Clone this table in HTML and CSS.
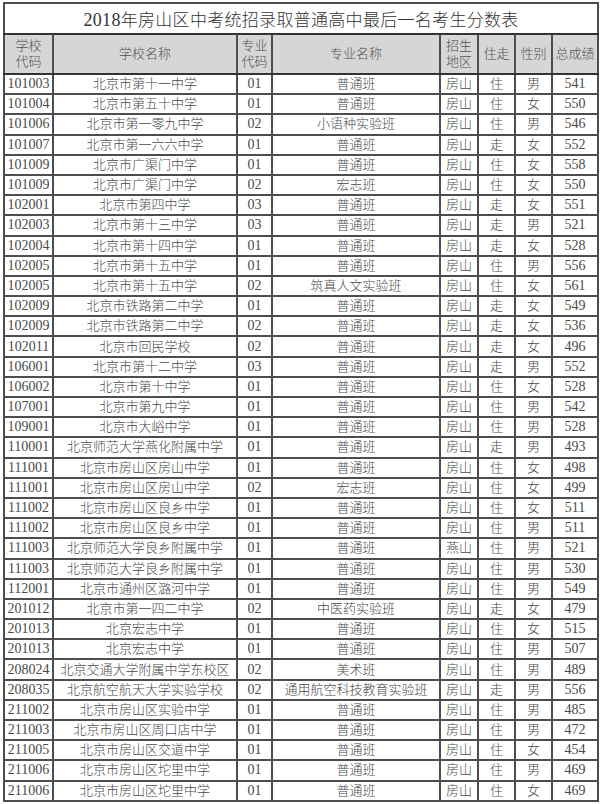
FILE: index.html
```html
<!DOCTYPE html>
<html lang="zh-CN">
<head>
<meta charset="utf-8">
<title>2018年房山区中考统招录取普通高中最后一名考生分数表</title>
<link rel="stylesheet" href="styles.css">
</head>
<body>
<table class="sheet">
  <colgroup>
    <col class="c-code"><col class="c-school"><col class="c-mcode"><col class="c-major"><col class="c-area"><col class="c-stay"><col class="c-sex"><col class="c-score">
  </colgroup>
  <thead>
    <tr class="title-row"><th colspan="8"><span class="num">2018</span>年房山区中考统招录取普通高中最后一名考生分数表</th></tr>
    <tr class="head-row">
      <th>学校<br>代码</th><th>学校名称</th><th>专业<br>代码</th><th>专业名称</th><th>招生<br>地区</th><th>住走</th><th>性别</th><th>总成绩</th>
    </tr>
  </thead>
  <tbody>
    <tr><td class="num">101003</td><td>北京市第十一中学</td><td class="num">01</td><td>普通班</td><td>房山</td><td>住</td><td>男</td><td class="num">541</td></tr>
    <tr><td class="num">101004</td><td>北京市第五十中学</td><td class="num">01</td><td>普通班</td><td>房山</td><td>住</td><td>女</td><td class="num">550</td></tr>
    <tr><td class="num">101006</td><td>北京市第一零九中学</td><td class="num">02</td><td>小语种实验班</td><td>房山</td><td>住</td><td>男</td><td class="num">546</td></tr>
    <tr><td class="num">101007</td><td>北京市第一六六中学</td><td class="num">01</td><td>普通班</td><td>房山</td><td>走</td><td>女</td><td class="num">552</td></tr>
    <tr><td class="num">101009</td><td>北京市广渠门中学</td><td class="num">01</td><td>普通班</td><td>房山</td><td>住</td><td>女</td><td class="num">558</td></tr>
    <tr><td class="num">101009</td><td>北京市广渠门中学</td><td class="num">02</td><td>宏志班</td><td>房山</td><td>住</td><td>女</td><td class="num">550</td></tr>
    <tr><td class="num">102001</td><td>北京市第四中学</td><td class="num">03</td><td>普通班</td><td>房山</td><td>走</td><td>女</td><td class="num">551</td></tr>
    <tr><td class="num">102003</td><td>北京市第十三中学</td><td class="num">03</td><td>普通班</td><td>房山</td><td>走</td><td>男</td><td class="num">521</td></tr>
    <tr><td class="num">102004</td><td>北京市第十四中学</td><td class="num">01</td><td>普通班</td><td>房山</td><td>走</td><td>女</td><td class="num">528</td></tr>
    <tr><td class="num">102005</td><td>北京市第十五中学</td><td class="num">01</td><td>普通班</td><td>房山</td><td>住</td><td>男</td><td class="num">556</td></tr>
    <tr><td class="num">102005</td><td>北京市第十五中学</td><td class="num">02</td><td>筑真人文实验班</td><td>房山</td><td>住</td><td>女</td><td class="num">561</td></tr>
    <tr><td class="num">102009</td><td>北京市铁路第二中学</td><td class="num">01</td><td>普通班</td><td>房山</td><td>走</td><td>女</td><td class="num">549</td></tr>
    <tr><td class="num">102009</td><td>北京市铁路第二中学</td><td class="num">02</td><td>普通班</td><td>房山</td><td>走</td><td>女</td><td class="num">536</td></tr>
    <tr><td class="num">102011</td><td>北京市回民学校</td><td class="num">02</td><td>普通班</td><td>房山</td><td>走</td><td>女</td><td class="num">496</td></tr>
    <tr><td class="num">106001</td><td>北京市第十二中学</td><td class="num">03</td><td>普通班</td><td>房山</td><td>走</td><td>男</td><td class="num">552</td></tr>
    <tr><td class="num">106002</td><td>北京市第十中学</td><td class="num">01</td><td>普通班</td><td>房山</td><td>住</td><td>女</td><td class="num">528</td></tr>
    <tr><td class="num">107001</td><td>北京市第九中学</td><td class="num">01</td><td>普通班</td><td>房山</td><td>住</td><td>男</td><td class="num">542</td></tr>
    <tr><td class="num">109001</td><td>北京市大峪中学</td><td class="num">01</td><td>普通班</td><td>房山</td><td>住</td><td>男</td><td class="num">528</td></tr>
    <tr><td class="num">110001</td><td>北京师范大学燕化附属中学</td><td class="num">01</td><td>普通班</td><td>房山</td><td>走</td><td>男</td><td class="num">493</td></tr>
    <tr><td class="num">111001</td><td>北京市房山区房山中学</td><td class="num">01</td><td>普通班</td><td>房山</td><td>住</td><td>女</td><td class="num">498</td></tr>
    <tr><td class="num">111001</td><td>北京市房山区房山中学</td><td class="num">02</td><td>宏志班</td><td>房山</td><td>住</td><td>女</td><td class="num">499</td></tr>
    <tr><td class="num">111002</td><td>北京市房山区良乡中学</td><td class="num">01</td><td>普通班</td><td>房山</td><td>住</td><td>女</td><td class="num">511</td></tr>
    <tr><td class="num">111002</td><td>北京市房山区良乡中学</td><td class="num">01</td><td>普通班</td><td>房山</td><td>住</td><td>男</td><td class="num">511</td></tr>
    <tr><td class="num">111003</td><td>北京师范大学良乡附属中学</td><td class="num">01</td><td>普通班</td><td>燕山</td><td>住</td><td>男</td><td class="num">521</td></tr>
    <tr><td class="num">111003</td><td>北京师范大学良乡附属中学</td><td class="num">01</td><td>普通班</td><td>房山</td><td>住</td><td>男</td><td class="num">530</td></tr>
    <tr><td class="num">112001</td><td>北京市通州区潞河中学</td><td class="num">01</td><td>普通班</td><td>房山</td><td>住</td><td>男</td><td class="num">549</td></tr>
    <tr><td class="num">201012</td><td>北京市第一四二中学</td><td class="num">02</td><td>中医药实验班</td><td>房山</td><td>走</td><td>女</td><td class="num">479</td></tr>
    <tr><td class="num">201013</td><td>北京宏志中学</td><td class="num">01</td><td>普通班</td><td>房山</td><td>住</td><td>女</td><td class="num">515</td></tr>
    <tr><td class="num">201013</td><td>北京宏志中学</td><td class="num">01</td><td>普通班</td><td>房山</td><td>住</td><td>男</td><td class="num">507</td></tr>
    <tr><td class="num">208024</td><td>北京交通大学附属中学东校区</td><td class="num">02</td><td>美术班</td><td>房山</td><td>住</td><td>男</td><td class="num">489</td></tr>
    <tr><td class="num">208035</td><td>北京航空航天大学实验学校</td><td class="num">02</td><td>通用航空科技教育实验班</td><td>房山</td><td>走</td><td>男</td><td class="num">556</td></tr>
    <tr><td class="num">211002</td><td>北京市房山区实验中学</td><td class="num">01</td><td>普通班</td><td>房山</td><td>住</td><td>男</td><td class="num">485</td></tr>
    <tr><td class="num">211003</td><td>北京市房山区周口店中学</td><td class="num">01</td><td>普通班</td><td>房山</td><td>住</td><td>男</td><td class="num">472</td></tr>
    <tr><td class="num">211005</td><td>北京市房山区交道中学</td><td class="num">01</td><td>普通班</td><td>房山</td><td>住</td><td>女</td><td class="num">454</td></tr>
    <tr><td class="num">211006</td><td>北京市房山区坨里中学</td><td class="num">01</td><td>普通班</td><td>房山</td><td>住</td><td>男</td><td class="num">469</td></tr>
    <tr><td class="num">211006</td><td>北京市房山区坨里中学</td><td class="num">01</td><td>普通班</td><td>房山</td><td>住</td><td>女</td><td class="num">469</td></tr>
  </tbody>
</table>
</body>
</html>
```

FILE: styles.css
```css
html, body {
  margin: 0;
  padding: 0;
  background: #ffffff;
}

body {
  padding: 2px 0 0 3px;
  font-family: "Liberation Serif", "Noto Sans CJK SC", serif;
  color: #4a4a4a;
}

.sheet {
  width: 594px;
  border-collapse: collapse;
  table-layout: fixed;
  border: 2px solid #333333;
}

.c-code { width: 49px; }
.c-school { width: 184px; }
.c-mcode { width: 35px; }
.c-major { width: 168px; }
.c-area { width: 38px; }
.c-stay { width: 37px; }
.c-sex { width: 37px; }
.c-score { width: 46px; }

.sheet th,
.sheet td {
  border: 2px solid #4d4d4d;
  padding: 0;
  text-align: center;
  vertical-align: middle;
  white-space: nowrap;
  overflow: hidden;
}

.title-row th {
  height: 29px;
  font-size: 17px;
  font-weight: 300;
  color: #333333;
  background: #ffffff;
  letter-spacing: 0.3px;
  border-bottom: 2px solid #333333;
}

.head-row th {
  height: 38px;
  background: #d6d6d6;
  font-size: 13px;
  font-weight: 300;
  line-height: 16px;
  color: #505050;
  border-bottom: 2px solid #333333;
}

.sheet tbody tr {
  height: 20.2px;
}

.sheet tbody td {
  font-size: 13px;
  font-weight: 300;
  line-height: 16px;
  color: #484848;
}

.sheet td.num {
  font-size: 14px;
  font-weight: 400;
  color: #4a4a4a;
}

.title-row .num {
  font-size: 18px;
}
```
